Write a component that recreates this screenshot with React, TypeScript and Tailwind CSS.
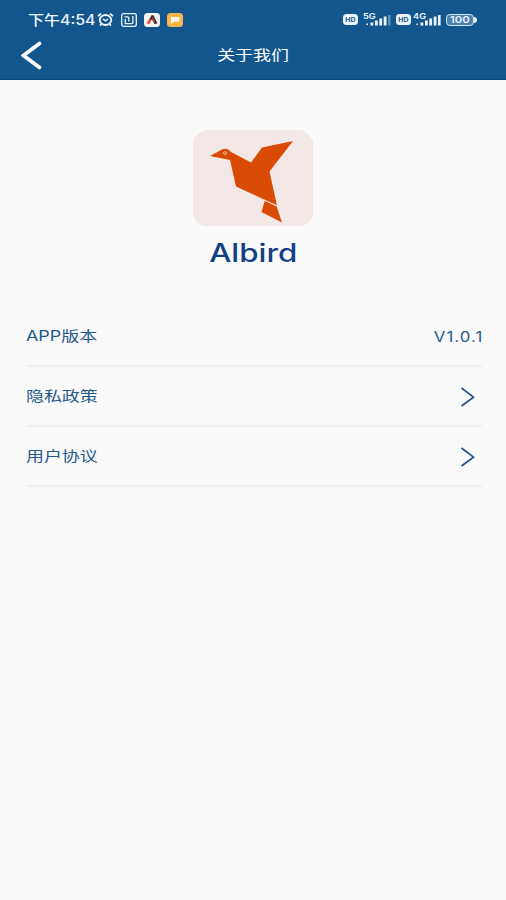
import { ReactNode } from 'react';

interface RowProps {
  label: string;
  children: ReactNode;
}

function AlarmIcon() {
  return (
    <svg className="h-[15px] w-[17px]" viewBox="0 0 17 15" fill="none" stroke="currentColor">
      <ellipse cx="8.5" cy="8" rx="5.8" ry="5" strokeWidth="1.8" />
      <path d="M1 4.2 4 1.6M16 4.2 13 1.6M4.2 12.2 3 13.6M12.8 12.2 14 13.6" strokeWidth="1.7" />
      <path d="M6 7 8.5 8.8 11 7" strokeWidth="1.5" />
    </svg>
  );
}

function NfcIcon() {
  return (
    <svg className="h-[14px] w-[16px]" viewBox="0 0 16 14" fill="none" stroke="currentColor">
      <rect x="0.7" y="0.7" width="14.6" height="12.6" rx="2" strokeWidth="1.3" />
      <path d="M3.5 3.8h3c1 0 1.3.4 1.3 1.2V8.5M3.5 10.7h7c1 0 1.4-.4 1.4-1.2V3M4.3 6v4.5" strokeWidth="1.3" />
    </svg>
  );
}

function ReaderIcon() {
  return (
    <svg className="h-[14px] w-[16px]" viewBox="0 0 16 14">
      <rect width="16" height="14" rx="3.5" fill="#f5f3f1" />
      <path d="M5.5 6 7.5 2.2H9.500L13.5 10.500 10.500 11 8 6.500 6.500 8Z" fill="#413036" />
      <path d="M2.500 10.500 5.500 5.500 7.500 7 5.500 11Z" fill="#df553d" />
      <path d="m8.300 4.500 2.500 4.500" stroke="#df553d" />
    </svg>
  );
}

function NoteIcon() {
  return (
    <svg className="h-[14px] w-[16px]" viewBox="0 0 16 14">
      <rect width="16" height="14" rx="3.5" fill="#f8b54e" />
      <path d="M4 4h8.5v4.5H8L4 10.5Z" fill="#fff7df" />
    </svg>
  );
}

function HdBadge() {
  return (
    <span className="flex h-[11px] w-[15px] items-center justify-center rounded-[3.5px] bg-[#edf5fa]">
      <span className="scale-x-115 text-[6px] leading-none font-bold text-[#1a568a]">HD</span>
    </span>
  );
}

function Signal({ label, weak }: { label: string; weak?: boolean }) {
  return (
    <span className="relative block h-[14px] w-[28px]">
      <span className="absolute -top-px left-0 origin-left scale-x-115 text-[8px] leading-[8px] font-semibold">
        {label}
      </span>
      <svg className="h-[14px] w-[28px]" viewBox="0 0 28 14" fill="currentColor">
        <path d="M3.5 10.5h1.5V12H3.5zM7.5 9.5h2.8V12.5H7.5zM12 7.5h2.8v5H12zM16.3 5.5h2.8v7h-2.8zM20.7 3.5h2.8v9h-2.8z" />
        <path d="M25 2h2.6v10.5H25z" opacity={weak ? 0.35 : 1} />
      </svg>
    </span>
  );
}

function Battery() {
  return (
    <span className="flex items-center">
      <span className="flex h-[12px] w-[28px] items-center justify-center rounded-[4px] border-[1.5px] border-[#d5e7f2] bg-[#4b81ac]">
        <span className="scale-x-125 text-[9px] leading-none font-semibold">100</span>
      </span>
      <span className="h-[6px] w-[3px] rounded-r-full bg-[#e4f0f6]" />
    </span>
  );
}

function StatusBar() {
  return (
    <div className="flex h-[32px] items-center justify-between pt-[7px] pr-[29px] pl-[28px] text-[#eef5fa]">
      <div className="flex items-center">
        <span className="w-[70px] text-[14px] leading-[16px] font-medium whitespace-nowrap">
          <span className="inline-block origin-left scale-x-[1.14]">下午4:54</span>
        </span>
        <div className="-ml-px flex items-center gap-[7px]">
          <AlarmIcon />
          <NfcIcon />
          <ReaderIcon />
          <NoteIcon />
        </div>
      </div>
      <div className="flex items-center gap-[5px]">
        <HdBadge />
        <Signal label="5G" weak />
        <HdBadge />
        <div className="-ml-[3px]">
          <Signal label="4G" />
        </div>
        <Battery />
      </div>
    </div>
  );
}

function BirdLogo() {
  return (
    <svg className="h-[96px] w-[120px]" viewBox="0 0 120 96">
      <path
        d="M12 0H108Q112 1 115 4T120 11V85Q118 94 108 96H12Q2 94 0 85V11Q1 7 5 4T12 0Z"
        fill="#f3e8e6"
      />
      <g fill="#d94a04">
        <path d="M17 26 29 19.5Q34 17 38 22L58 32.5 69 17.5 100 11 76.5 41.5 84 75.5 43 56.5 37 30Z" />
        <path d="M72 70 83.5 76 89 92.5 68.5 82Z" />
      </g>
      <path d="M71 70 85 76.5" stroke="#f9ded5" strokeWidth="1.2" />
      <ellipse cx="32" cy="23" rx="1.5" ry="1.3" fill="none" stroke="#f3c9b2" strokeWidth="0.9" />
    </svg>
  );
}

function Chevron() {
  return (
    <svg className="mt-[2px] mr-[7px] h-[20px] w-[15px]" viewBox="0 0 15 20" fill="none">
      <path d="M1.5 1 13.5 10.2 1.5 19" stroke="#23508a" strokeWidth="1.7" />
    </svg>
  );
}

function Row({ label, children }: RowProps) {
  return (
    <div className="flex h-[60px] items-center justify-between border-b-2 border-[#f0f0f1] text-[14px] text-[#24598a]">
      <span className="mb-px origin-left scale-x-[1.28]">{label}</span>
      {children}
    </div>
  );
}

export default function App() {
  return (
    <div className="h-[900px] w-[506px] overflow-hidden bg-[#fafafa] font-[Inter,'Noto_Sans_CJK_SC',sans-serif]">
      <header className="h-[80px] border-b border-[#0c447c] bg-[#13568d]">
        <StatusBar />
        <div className="grid h-[47px] grid-cols-[1fr_auto_1fr] items-center text-white">
          <svg className="ml-[21px] h-[29px] w-[21px]" viewBox="0 0 21 29" fill="none">
            <path d="M18.5 2.5 2.5 14.5 18.5 26.5" stroke="white" strokeWidth="3.7" strokeLinecap="round" />
          </svg>
          <h1 className="mb-[2px] scale-x-[1.28] text-[14px]">关于我们</h1>
        </div>
      </header>
      <main className="pt-[50px] pr-[24px] pl-[26px]">
        <div className="-ml-[2px] flex flex-col items-center">
          <BirdLogo />
          <h2 className="mt-[9px] scale-x-[1.25] text-[25px] leading-[36px] font-medium text-[#133f83]">
            Albird
          </h2>
        </div>
        <div className="mt-[36px]">
          <Row label="APP版本">
            <span className="-mr-px origin-right scale-x-[1.2] tracking-[0.9px]">V1.0.1</span>
          </Row>
          <Row label="隐私政策">
            <Chevron />
          </Row>
          <Row label="用户协议">
            <Chevron />
          </Row>
        </div>
      </main>
    </div>
  );
}
